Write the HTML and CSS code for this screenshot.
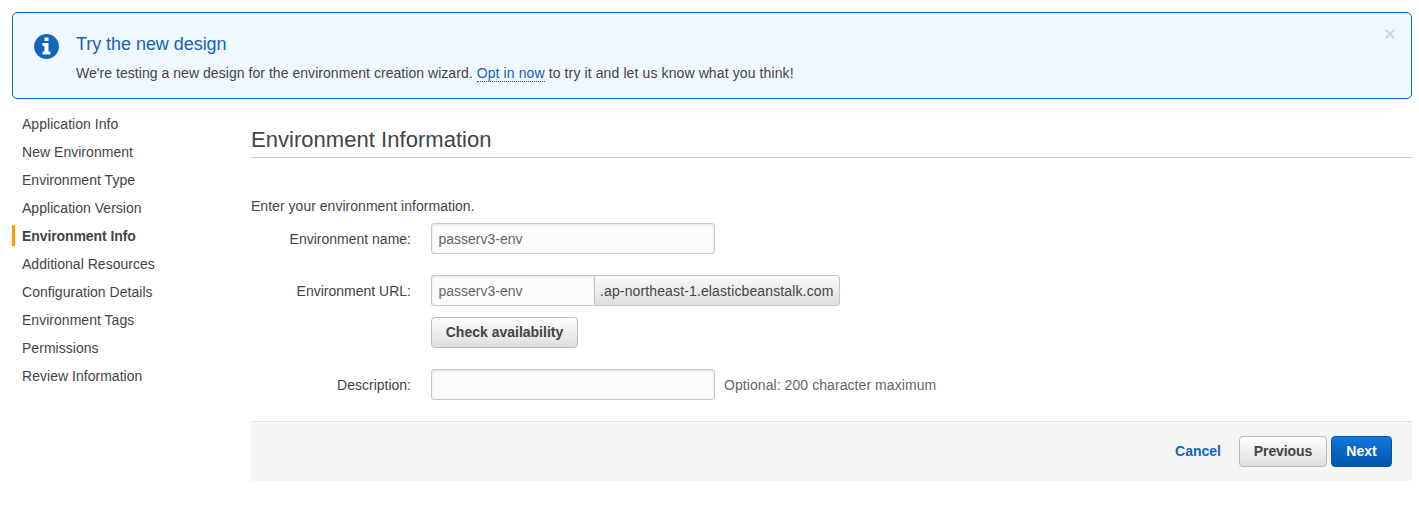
FILE: index.html
```
<!DOCTYPE html>
<html lang="en">
<head>
<meta charset="utf-8">
<title>Environment Information</title>
<link rel="stylesheet" href="styles.css">
</head>
<body>
<section class="alert">
  <svg class="alert-icon" width="25" height="25" viewBox="0 0 25 25"><circle cx="12.5" cy="12.5" r="12.4" fill="#1166bb"/><path fill="#fff" d="M10.500 3.500h4v3.500h-4zM8.500 9h6v8.500h2v3h-8v-3h2v-5.500h-2z"/></svg>
  <div class="alert-body">
    <h2 class="alert-title">Try the new design</h2>
    <p class="alert-text"><span class="alert-lead">We're testing a new design for the environment creation wizard.</span> <a class="alert-link">Opt in now</a> to try it and let us know what you think!</p>
  </div>
  <svg class="alert-close" width="10" height="10" viewBox="0 0 10 10"><path d="M.7.7l8.600 8.600M9.300.7l-8.600 8.600" stroke="#c3d9ef" stroke-width="2" fill="none"/></svg>
</section>
<div class="layout">
  <nav class="steps">
    <a class="step">Application Info</a>
    <a class="step">New Environment</a>
    <a class="step">Environment Type</a>
    <a class="step">Application Version</a>
    <a class="step active">Environment Info</a>
    <a class="step">Additional Resources</a>
    <a class="step">Configuration Details</a>
    <a class="step">Environment Tags</a>
    <a class="step">Permissions</a>
    <a class="step">Review Information</a>
  </nav>
  <main class="content">
    <h1 class="title">Environment Information</h1>
    <p class="intro">Enter your environment information.</p>
    <form class="form">
      <div class="row">
        <label class="label">Environment name:</label>
        <input class="field" type="text" value="passerv3-env">
      </div>
      <div class="row">
        <label class="label">Environment URL:</label>
        <input class="field short" type="text" value="passerv3-env"><span class="addon">.ap-northeast-1.elasticbeanstalk.com</span>
      </div>
      <div class="row check"><button class="btn check-btn" type="button">Check availability</button></div>
      <div class="row">
        <label class="label">Description:</label>
        <input class="field" type="text"><span class="hint">Optional: 200 character maximum</span>
      </div>
    </form>
    <footer class="actions">
      <a class="cancel">Cancel</a>
      <button class="btn previous" type="button">Previous</button>
      <button class="btn primary" type="button">Next</button>
    </footer>
  </main>
</div>
</body>
</html>
```
FILE: styles.css
```
* { box-sizing: border-box; }
body {
  margin: 0;
  padding: 12px 7px 0 12px;
  background: #fff;
  color: #444;
  font: 14px/21px "Liberation Sans", Arial, sans-serif;
}
h1, h2, p { margin: 0; font-weight: normal; }
input, button { font: inherit; margin: 0; }

.alert {
  display: flex;
  align-items: flex-start;
  height: 87px;
  padding: 20px 16px 0 21px;
  border: 1px solid #1166bb;
  border-radius: 5px;
  background: #f0f8ff;
}
.alert-icon { margin: 1px 17px 0 0; }
.alert-body { flex: 1; }
.alert-title { font-size: 18px; line-height: 22px; letter-spacing: -.05px; color: #1a5dba; }
.alert-text { margin-top: 8px; white-space: nowrap; letter-spacing: .11px; }
.alert-lead { letter-spacing: .045px; }
.alert-link {
  display: inline-block;
  height: 19px;
  color: #1a5dba;
  border-bottom: 1px dotted #1166bb;
}
.alert-close { margin-top: -4px; }

.layout { display: flex; }
.steps {
  display: flex;
  flex-direction: column;
  align-items: flex-start;
  gap: 7px;
  width: 239px;
  padding-top: 14px;
}
.step {
  height: 21px;
  padding: 1px 0 0 7px;
  border-left: 3px solid transparent;
  letter-spacing: .03px;
}
.step.active { border-color: #f90; font-weight: bold; letter-spacing: -.09px; }

.content { flex: 1; }
.title {
  height: 59px;
  padding-top: 27px;
  border-bottom: 1px solid #ccc;
  font-size: 22px;
  line-height: 28px;
  letter-spacing: .04px;
}
.intro { margin-top: 38px; letter-spacing: .03px; }
.form {
  display: flex;
  flex-direction: column;
  gap: 21px;
  margin-top: 6px;
}
.row { display: flex; align-items: center; height: 31px; }
.row.check { margin-top: -10px; padding-left: 180px; }
.label { width: 160px; margin-right: 20px; padding-top: 2px; text-align: right; }
.field {
  width: 284px;
  height: 31px;
  padding: 1px 7px 0 6.500px;
  border: 1px solid #c8c8c8;
  border-radius: 3px;
  background: #fcfcfc;
  box-shadow: inset 0 1px 3px rgba(0, 0, 0, .1);
  color: #666;
}
.field.short { width: 163px; border-right: 0; border-radius: 3px 0 0 3px; }
.addon {
  width: 246px;
  height: 31px;
  padding: 5px 0 0 5px;
  border: 1px solid #c4c4c4;
  border-radius: 0 3px 3px 0;
  background: linear-gradient(#fbfbfb, #ddd);
  letter-spacing: .13px;
}
.hint { margin-left: 9px; padding-top: 2px; letter-spacing: .07px; color: #666; }
.btn {
  height: 31px;
  padding: 0 0 1px;
  border: 1px solid #bbb;
  border-radius: 4px;
  background: linear-gradient(#fff, #ddd);
  color: #444;
  font-weight: bold;
}
.check-btn { width: 147px; }
.actions {
  display: flex;
  align-items: center;
  justify-content: flex-end;
  height: 60px;
  margin-top: 21px;
  padding-right: 20px;
  border-top: 1px solid #e2e2e2;
  background: #f5f5f5;
}
.cancel { margin-right: 18px; color: #1166bb; font-weight: bold; }
.previous { width: 88px; margin-right: 4px; letter-spacing: -.1px; }
.primary {
  width: 61px;
  border-color: #0055aa;
  background: linear-gradient(#1177dd, #0055aa);
  color: #fff;
}
```
